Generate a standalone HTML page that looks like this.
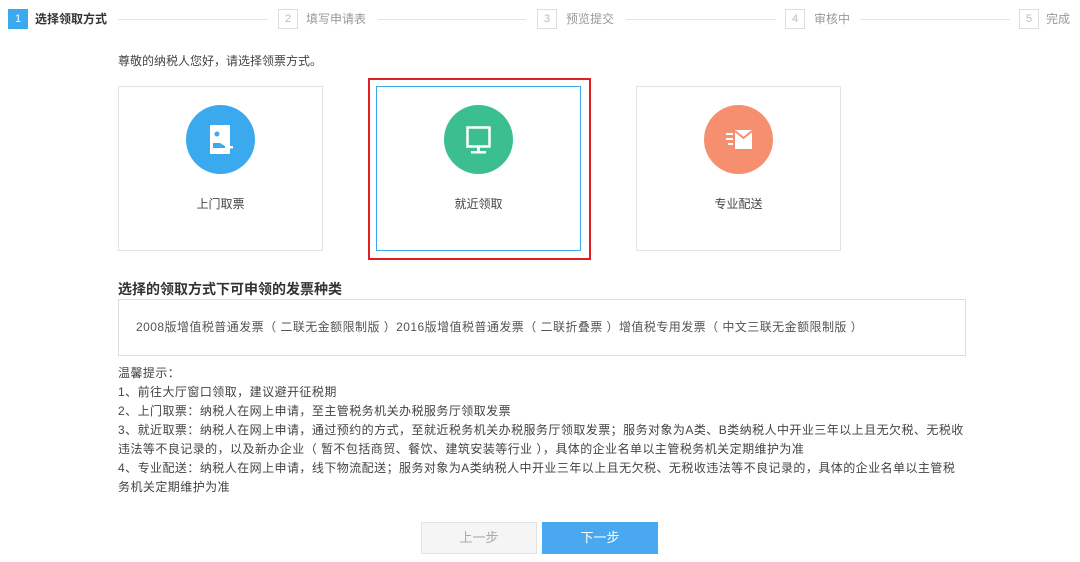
<!DOCTYPE html>
<html><head><meta charset="utf-8"><style>
*{margin:0;padding:0;box-sizing:border-box}
body{width:1080px;height:562px;background:#fff;font-family:"Liberation Sans","Noto Sans CJK SC",sans-serif;font-size:12px;color:#333;position:relative;overflow:hidden}
.a{position:absolute}
.sb{position:absolute;top:9px;width:20px;height:20px;border:1px solid #ddd;color:#bbb;text-align:center;line-height:18px;font-size:11px}
.st{position:absolute;top:12px;color:#999;font-size:12px;line-height:14px}
.ln{position:absolute;top:19px;height:1px;background:#e5e5e5}
.card{position:absolute;top:86px;width:205px;height:165px;border:1px solid #e3e3e3;background:#fff}
.circ{position:absolute;left:67px;top:18px;width:69px;height:69px;border-radius:50%}
.lab{position:absolute;top:108px;width:100%;text-align:center;color:#444}
.tip{position:absolute;left:118px;line-height:19px;color:#444;letter-spacing:0.45px;white-space:nowrap}
</style></head><body>
<div class="sb" style="left:8px;background:#3aa9ee;border-color:#3aa9ee;color:#fff">1</div>
<div class="st" style="left:35px;color:#333;font-weight:bold">选择领取方式</div>
<div class="ln" style="left:118px;width:150px"></div>
<div class="sb" style="left:278px">2</div>
<div class="st" style="left:306px">填写申请表</div>
<div class="ln" style="left:378px;width:148px"></div>
<div class="sb" style="left:537px">3</div>
<div class="st" style="left:566px">预览提交</div>
<div class="ln" style="left:626px;width:150px"></div>
<div class="sb" style="left:785px">4</div>
<div class="st" style="left:814px">审核中</div>
<div class="ln" style="left:860px;width:150px"></div>
<div class="sb" style="left:1019px">5</div>
<div class="st" style="left:1046px">完成</div>

<div class="a" style="left:118px;top:52px;color:#444">尊敬的纳税人您好，请选择领票方式。</div>

<div class="card" style="left:118px"><div class="circ" style="background:#3aa9ee"><svg width="69" height="69" viewBox="0 0 69 69"><rect x="24" y="20" width="20" height="29" rx="1" fill="#fff"/><circle cx="31" cy="29" r="2.5" fill="#3aa9ee"/><path d="M27 38h7l5 3v2h-12z" fill="#3aa9ee"/><rect x="41" y="41" width="6" height="2.5" fill="#fff"/></svg></div><div class="lab">上门取票</div></div>
<div class="a" style="left:368px;top:78px;width:223px;height:182px;border:2px solid #e02020"></div>
<div class="card" style="left:376px;border-color:#3aa9ee"><div class="circ" style="background:#3cbf8f"><svg width="69" height="69" viewBox="0 0 69 69"><rect x="23.5" y="22.5" width="22" height="19" fill="none" stroke="#fff" stroke-width="2.5"/><rect x="33" y="42" width="3" height="5" fill="#fff"/><rect x="27" y="46" width="15" height="2.5" fill="#fff"/></svg></div><div class="lab">就近领取</div></div>
<div class="card" style="left:636px"><div class="circ" style="background:#f58f6f"><svg width="69" height="69" viewBox="0 0 69 69"><path d="M31 25h17v19H31z" fill="#fff"/><path d="M31 26l8.5 7 8.5-7" fill="none" stroke="#f58f6f" stroke-width="2"/><rect x="22" y="28" width="7" height="2" fill="#fff"/><rect x="22" y="33" width="7" height="2" fill="#fff"/><rect x="24" y="38" width="5" height="2" fill="#fff"/></svg></div><div class="lab">专业配送</div></div>

<div class="a" style="left:118px;top:279px;font-size:14px;font-weight:bold;color:#333">选择的领取方式下可申领的发票种类</div>
<div class="a" style="left:118px;top:299px;width:848px;height:57px;border:1px solid #ddd;padding-left:17px;line-height:55px;color:#555;letter-spacing:0.45px;white-space:nowrap">2008版增值税普通发票（ 二联无金额限制版 ）2016版增值税普通发票（ 二联折叠票 ）增值税专用发票（ 中文三联无金额限制版 ）</div>

<div class="tip" style="top:364px">温馨提示：</div>
<div class="tip" style="top:383px">1、前往大厅窗口领取，建议避开征税期</div>
<div class="tip" style="top:402px">2、上门取票：纳税人在网上申请，至主管税务机关办税服务厅领取发票</div>
<div class="tip" style="top:421px">3、就近取票：纳税人在网上申请，通过预约的方式，至就近税务机关办税服务厅领取发票；服务对象为A类、B类纳税人中开业三年以上且无欠税、无税收</div>
<div class="tip" style="top:440px">违法等不良记录的，以及新办企业（ 暂不包括商贸、餐饮、建筑安装等行业 ），具体的企业名单以主管税务机关定期维护为准</div>
<div class="tip" style="top:459px">4、专业配送：纳税人在网上申请，线下物流配送；服务对象为A类纳税人中开业三年以上且无欠税、无税收违法等不良记录的，具体的企业名单以主管税</div>
<div class="tip" style="top:478px">务机关定期维护为准</div>

<div class="a" style="left:421px;top:522px;width:116px;height:32px;border:1px solid #e3e3e3;background:#f5f5f5;color:#aaa;text-align:center;line-height:30px;font-size:13px">上一步</div>
<div class="a" style="left:542px;top:522px;width:116px;height:32px;background:#4aa8f0;color:#fff;text-align:center;line-height:32px;font-size:13px">下一步</div>
</body></html>
